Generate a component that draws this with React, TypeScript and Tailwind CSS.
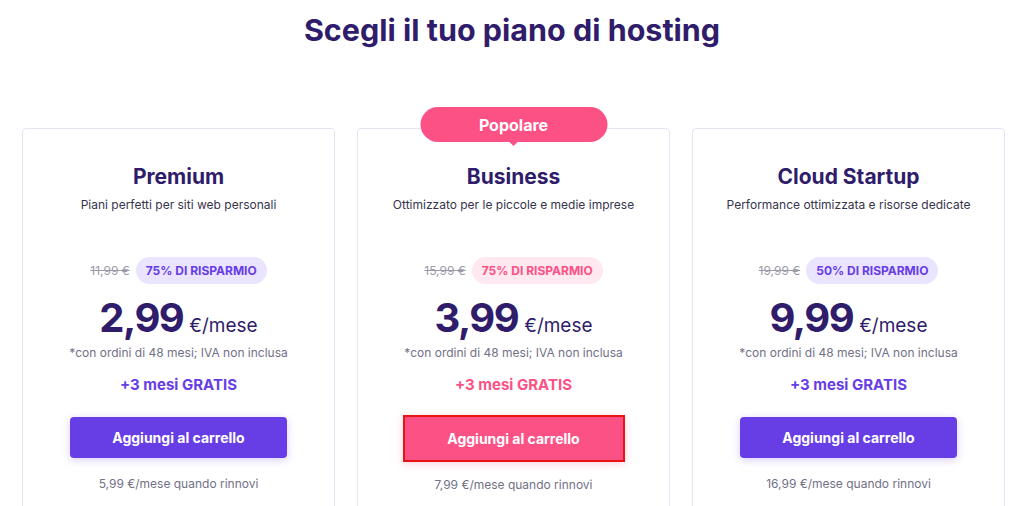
const plans = [
  {
    name: "Premium",
    desc: "Piani perfetti per siti web personali",
    old: "11,99 €",
    save: "75% DI RISPARMIO",
    price: "2,99",
    renew: "5,99 €/mese quando rinnovi",
    popular: false,
  },
  {
    name: "Business",
    desc: "Ottimizzato per le piccole e medie imprese",
    old: "15,99 €",
    save: "75% DI RISPARMIO",
    price: "3,99",
    renew: "7,99 €/mese quando rinnovi",
    popular: true,
  },
  {
    name: "Cloud Startup",
    desc: "Performance ottimizzata e risorse dedicate",
    old: "19,99 €",
    save: "50% DI RISPARMIO",
    price: "9,99",
    renew: "16,99 €/mese quando rinnovi",
    popular: false,
  },
];

function PlanCard({ plan }: { plan: (typeof plans)[number] }) {
  return (
    <div className="relative h-[400px] rounded-[4px] border border-[#e6e4f4] bg-white flex flex-col items-center">
      {plan.popular && (
        <div className="absolute -top-[22px] left-1/2 -translate-x-1/2">
          <div className="w-[187px] h-[35px] rounded-full bg-[#fc5185] text-white text-[16px] font-bold flex items-center justify-center">
            Popolare
          </div>
          <div className="absolute left-1/2 -translate-x-1/2 -bottom-[4px] w-0 h-0 border-l-[5px] border-r-[5px] border-t-[5px] border-l-transparent border-r-transparent border-t-[#fc5185]" />
        </div>
      )}
      <h2 className="mt-[34px] text-[21px] leading-[28px] font-bold text-[#2f1c6a]">{plan.name}</h2>
      <p className="mt-[6px] text-[12px] leading-[16px] text-[#36344d]">{plan.desc}</p>
      <div className="mt-[44px] flex items-center gap-[6px]">
        <span className="text-[12px] text-[#9b9aa8] line-through">{plan.old}</span>
        <span
          className={
            plan.popular
              ? "h-[27px] px-[10px] rounded-full bg-[#ffe8ef] text-[#fc5185] text-[12px] font-bold flex items-center"
              : "h-[27px] px-[10px] rounded-full bg-[#ebe4ff] text-[#673de6] text-[12px] font-bold flex items-center"
          }
        >
          {plan.save}
        </span>
      </div>
      <div className="mt-[8px] flex items-baseline gap-[6px] text-[#2f1c6a]">
        <span className="text-[40px] leading-[52px] font-bold tracking-[-1.5px]">{plan.price}</span>
        <span className="text-[19px] text-[#2f1c6a]">€/mese</span>
      </div>
      <p className="mt-[1px] text-[12px] leading-[16px] text-[#727086]">*con ordini di 48 mesi; IVA non inclusa</p>
      <p
        className={
          plan.popular
            ? "mt-[14px] text-[15px] leading-[20px] font-bold text-[#fc5185]"
            : "mt-[14px] text-[15px] leading-[20px] font-bold text-[#673de6]"
        }
      >
        +3 mesi GRATIS
      </p>
      {plan.popular ? (
        <button className="mt-[20px] w-[222px] h-[47px] border-2 border-[#e81414] bg-[#fc5185] text-white text-[14px] font-bold shadow-[0_2px_8px_rgba(252,81,133,0.25)]">
          Aggiungi al carrello
        </button>
      ) : (
        <button className="mt-[22px] w-[217px] h-[41px] rounded-[4px] bg-[#673de6] text-white text-[14px] font-bold shadow-[0_2px_8px_rgba(103,61,230,0.25)]">
          Aggiungi al carrello
        </button>
      )}
      <p className={plan.popular ? "mt-[14px] text-[12px] text-[#727086]" : "mt-[17px] text-[12px] text-[#727086]"}>
        {plan.renew}
      </p>
    </div>
  );
}

export default function App() {
  return (
    <div className="w-[1024px] h-[506px] overflow-hidden bg-white font-['Inter',sans-serif]">
      <h1 className="pt-[11px] text-center text-[30.5px] leading-[38px] font-bold text-[#2f1c6a]">
        Scegli il tuo piano di hosting
      </h1>
      <div className="mt-[79px] pl-[22px] grid grid-cols-[313px_313px_313px] gap-[22px]">
        {plans.map((p) => (
          <PlanCard key={p.name} plan={p} />
        ))}
      </div>
    </div>
  );
}
